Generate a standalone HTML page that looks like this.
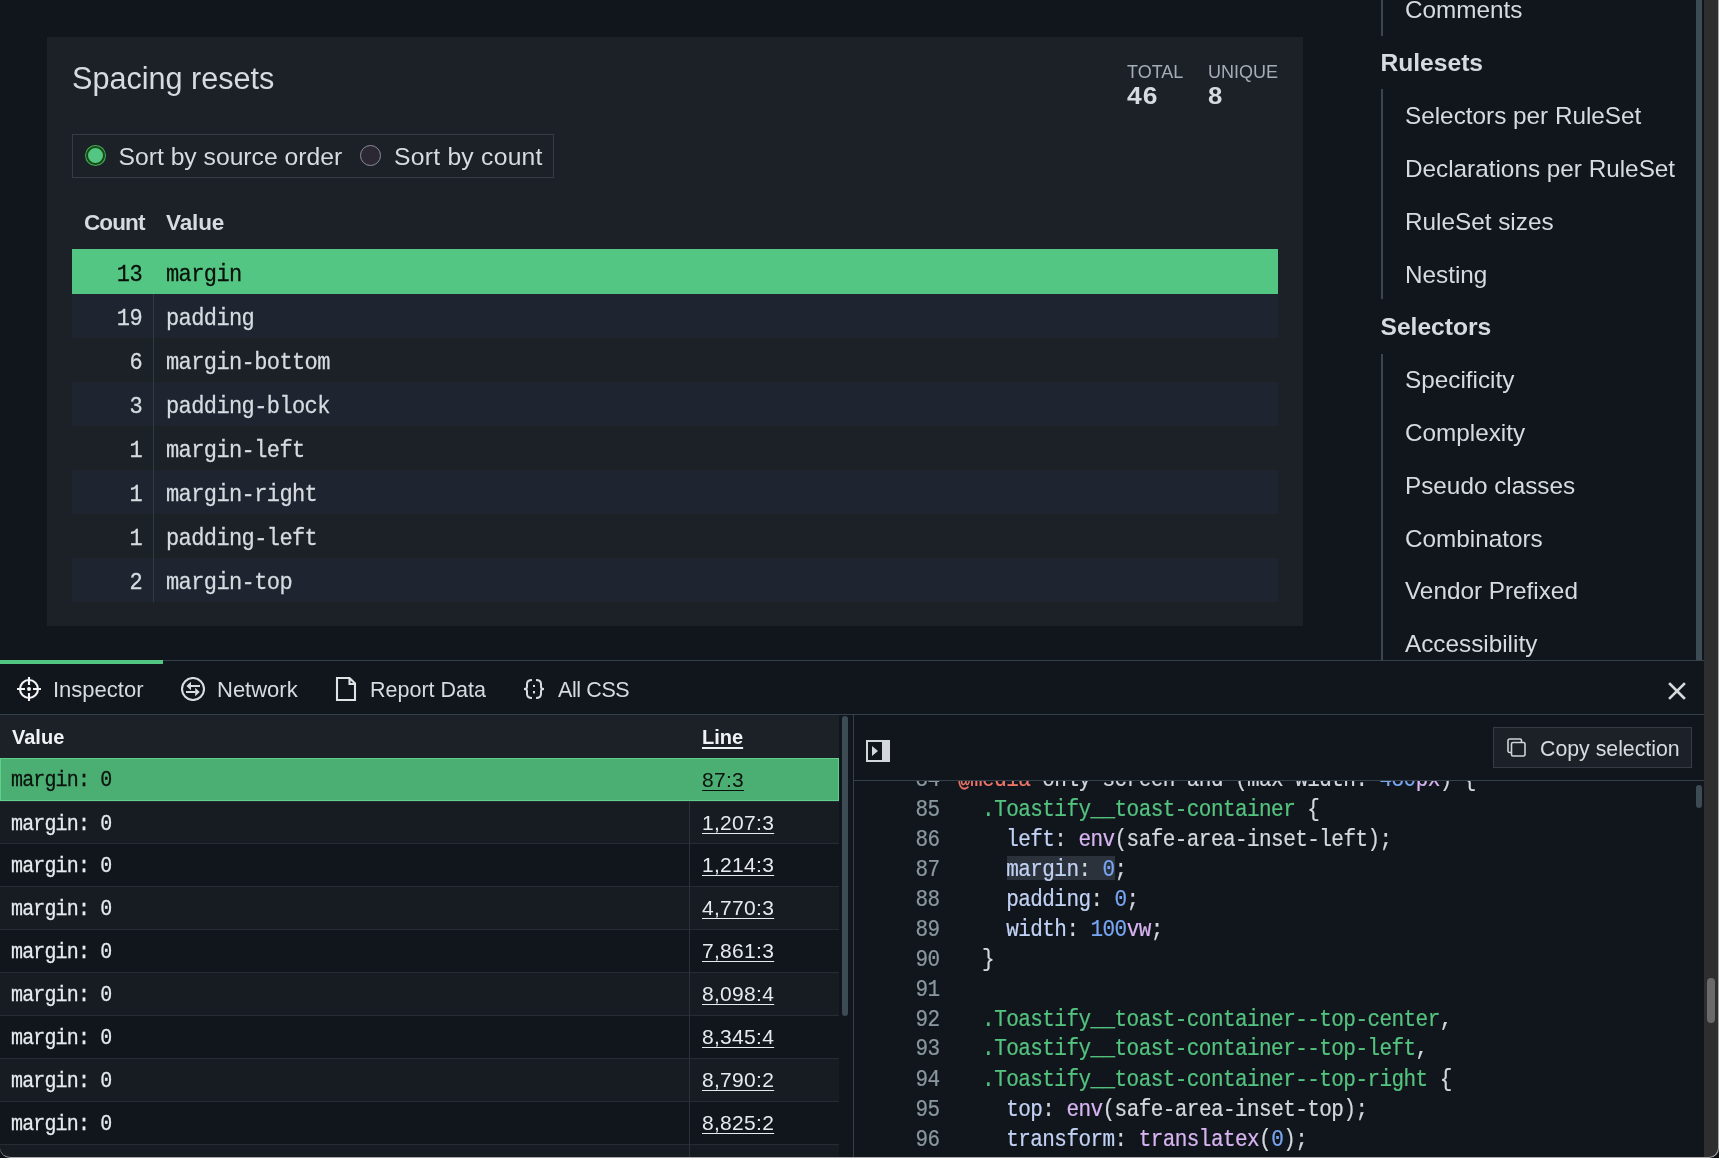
<!DOCTYPE html>
<html><head><meta charset="utf-8">
<style>
*{box-sizing:border-box;margin:0;padding:0}
html,body{width:1719px;height:1158px;overflow:hidden;background:#0c1116}
body{position:relative;font-family:"Liberation Sans",sans-serif;color:#d6dbe0}
.abs{position:absolute;white-space:pre}
.mono{font-family:"Liberation Mono",monospace}
#win{will-change:transform;position:absolute;left:0;top:0;width:1719px;height:1158px;overflow:hidden;background:#11161c;border-radius:0 0 10px 10px}
#card{position:absolute;left:47px;top:37px;width:1256px;height:589px;background:#1c2128}
.row{position:absolute;left:72px;width:1206px;height:44px}
.row .c{position:absolute;right:1136px;top:4.2px;line-height:44px;font-size:22px;letter-spacing:-0.6px;font-family:"Liberation Mono",monospace;-webkit-text-stroke:0.25px currentColor}
.row .v{position:absolute;left:94px;top:4.2px;line-height:44px;font-size:22px;letter-spacing:-0.6px;-webkit-text-stroke:0.25px currentColor}
.side{position:absolute;left:1405px;font-size:24.3px;line-height:30px;color:#d6dbe0}
.sideh{position:absolute;left:1380.5px;font-size:24.6px;font-weight:700;line-height:30px;color:#d6dbe0}
.sline{position:absolute;left:1381px;width:2px;background:#3a4751}
.row.g .c,.row.g .v{top:5px}
.row .c,.row .v{transform:scaleY(1.1);transform-origin:0 27.9px}
.brow .v{transform:scaleY(1.08);transform-origin:0 26.8px}
.tab{position:absolute;top:677px;font-size:22px;line-height:26px;color:#d6dbe0}
.brow{position:absolute;left:0;width:839px;height:43px;border-top:1px solid #242c34}
.brow .v{position:absolute;left:11px;top:1px;line-height:43px;font-size:20px;letter-spacing:-0.85px;color:#e6eaee;-webkit-text-stroke:0.25px currentColor}
.brow .l{position:absolute;left:702px;top:-1px;line-height:43px;font-size:21px;letter-spacing:0.3px;color:#e6eaee;text-decoration:underline;text-decoration-thickness:1px;text-underline-offset:3px}
.brow .d{position:absolute;left:689px;top:-1px;width:1px;height:43px;background:#2a333c}
.hl{}
.code div{white-space:pre;height:27.2727px}
.code{white-space:normal;position:absolute;font-size:21px;letter-spacing:-0.56px;line-height:27.2727px;transform:scaleY(1.1);transform-origin:0 0;font-family:"Liberation Mono",monospace;color:#d2d8de;-webkit-text-stroke:0.2px currentColor}
.ln{display:inline-block;width:79.5px;text-align:right;color:#8a979f;margin-right:18.5px}
.sel{color:#54c37f}.prop{color:#c2d2f5}.fn{color:#d8b4f2}.num{color:#78a6f2}.kw{color:#f0766a}
</style></head><body>
<div id="win">
  <!-- top card -->
  <div id="card"></div>
  <div class="abs" style="left:72px;top:59.5px;font-size:30.6px;line-height:36px">Spacing resets</div>
  <div class="abs" style="left:1127px;top:61.8px;font-size:18px;line-height:20px;color:#a3adb8">TOTAL</div>
  <div class="abs" style="left:1208px;top:61.8px;font-size:18px;line-height:20px;color:#a3adb8">UNIQUE</div>
  <div class="abs" style="left:1126.5px;top:81.8px;font-size:23px;line-height:28px;font-weight:700;letter-spacing:0.8px;transform:scaleX(1.15);transform-origin:left">46</div>
  <div class="abs" style="left:1208px;top:81.8px;font-size:23px;line-height:28px;font-weight:700;transform:scaleX(1.12);transform-origin:left">8</div>

  <div class="abs" style="left:72px;top:134px;width:482px;height:44px;border:1px solid #343d46"></div>
  <div class="abs" style="left:85.9px;top:146px;width:19px;height:19px;border-radius:50%;background:#53c683;border:2.7px solid #1a4a14;box-shadow:0 0 0 1px #3fae5a"></div>
  <div class="abs" style="left:118.5px;top:143px;font-size:24.7px;line-height:28px">Sort by source order</div>
  <div class="abs" style="left:360px;top:145px;width:21px;height:21px;border-radius:50%;background:#2b2833;border:1px solid #8e8b97"></div>
  <div class="abs" style="left:394px;top:143px;font-size:24.7px;line-height:28px;letter-spacing:0.25px">Sort by count</div>

  <div class="abs" style="left:84px;top:210px;font-size:22.5px;line-height:26px;font-weight:700;letter-spacing:-0.9px">Count</div>
  <div class="abs" style="left:166px;top:210px;font-size:22.5px;line-height:26px;font-weight:700;letter-spacing:-0.1px">Value</div>


  <div class="row g" style="top:249px;height:44.5px;background:#53c683;color:#0a0f0a"><span class="c">13</span><span class="v mono">margin</span></div>
  <div class="row" style="top:293.5px;background:#1f2530"><span class="c">19</span><span class="v mono">padding</span></div>
  <div class="row" style="top:337.5px"><span class="c">6</span><span class="v mono">margin-bottom</span></div>
  <div class="row" style="top:381.5px;background:#1f2530"><span class="c">3</span><span class="v mono">padding-block</span></div>
  <div class="row" style="top:425.5px"><span class="c">1</span><span class="v mono">margin-left</span></div>
  <div class="row" style="top:469.5px;background:#1f2530"><span class="c">1</span><span class="v mono">margin-right</span></div>
  <div class="row" style="top:513.5px"><span class="c">1</span><span class="v mono">padding-left</span></div>
  <div class="row" style="top:557.5px;background:#1f2530"><span class="c">2</span><span class="v mono">margin-top</span></div>

  <div class="abs" style="left:152.5px;top:293.5px;width:1px;height:308px;background:#2e3c45"></div>
  <!-- sidebar -->
  <div class="sline" style="top:0;height:36px"></div>
  <div class="side" style="top:calc(-4px - 1px)">Comments</div>
  <div class="sideh" style="top:calc(48.5px - 0.7px)">Rulesets</div>
  <div class="sline" style="top:89px;height:210px"></div>
  <div class="side" style="top:calc(101.5px - 1px)">Selectors per RuleSet</div>
  <div class="side" style="top:calc(154.5px - 1px)">Declarations per RuleSet</div>
  <div class="side" style="top:calc(207.5px - 1px)">RuleSet sizes</div>
  <div class="side" style="top:calc(260.5px - 1px)">Nesting</div>
  <div class="sideh" style="top:calc(312.5px - 0.7px)">Selectors</div>
  <div class="sline" style="top:354px;height:306px"></div>
  <div class="side" style="top:calc(365.5px - 1px)">Specificity</div>
  <div class="side" style="top:calc(418.5px - 1px)">Complexity</div>
  <div class="side" style="top:calc(471.5px - 1px)">Pseudo classes</div>
  <div class="side" style="top:calc(524.5px - 1px)">Combinators</div>
  <div class="side" style="top:calc(576.5px - 1px)">Vendor Prefixed</div>
  <div class="side" style="top:calc(629.5px - 1px)">Accessibility</div>
  <div class="abs" style="left:1696px;top:0;width:6px;height:660px;background:#3c4b54"></div>

  <!-- right grey strip -->
  <div class="abs" style="left:1704px;top:0;width:15px;height:1158px;background:#2e2e2e"></div>
  <div class="abs" style="left:1707px;top:978px;width:8px;height:45px;border-radius:4px;background:#6a6a6a"></div>

  <!-- bottom panel -->
  <div class="abs" style="left:0;top:660px;width:1704px;height:498px;background:#11161c;border-top:1px solid #34414a"></div>
  <div class="abs" style="left:0;top:660px;width:163px;height:4px;background:#53c683"></div>
  <div class="abs" style="left:0;top:714px;width:1704px;height:1px;background:#34414a"></div>

  <div class="tab" style="left:53px">Inspector</div>
  <div class="tab" style="left:217px">Network</div>
  <div class="tab" style="left:370px;font-size:21.5px">Report Data</div>
  <div class="tab" style="left:558px;font-size:21.5px;letter-spacing:-0.4px">All CSS</div>

  <svg class="abs" style="left:17px;top:677px" width="24" height="24" viewBox="0 0 24 24" fill="none" stroke="#f2f4f6" stroke-width="2.1">
    <circle cx="12" cy="12" r="9"/>
    <path d="M12 0V8M12 16V24M0 12H8M16 12H24"/>
    <circle cx="12" cy="12" r="2" fill="#f2f4f6" stroke="none"/>
  </svg>
  <svg class="abs" style="left:181px;top:677px" width="24" height="24" viewBox="0 0 24 24" fill="none" stroke="#d8dce0" stroke-width="2.1">
    <circle cx="12" cy="12" r="11"/>
    <path d="M9.5 9H19M5 15H14.5"/>
    <path d="M5.4 9L10 4.8V13.2Z M18.7 15L14.2 10.8V19.2Z" fill="#d8dce0" stroke="none"/>
  </svg>
  <svg class="abs" style="left:335px;top:677px" width="24" height="24" viewBox="0 0 24 24" fill="none" stroke="#dfe3e6" stroke-width="2.1">
    <path d="M2 1H14.5L20 6.5V23H2Z M14.5 1V7H20"/>
  </svg>
  <svg class="abs" style="left:522px;top:677px" width="24" height="24" viewBox="0 0 24 24" fill="none" stroke="#d8dce0" stroke-width="2">
    <path d="M10 3C6.5 3 5 4.5 5 7V10C5 11.5 4 12 2 12C4 12 5 12.5 5 14V17C5 19.5 6.5 21 10 21"/>
    <path d="M14 3C17.5 3 19 4.5 19 7V10C19 11.5 20 12 22 12C20 12 19 12.5 19 14V17C19 19.5 17.5 21 14 21"/>
    <rect x="11" y="8" width="2" height="2" fill="#d8dce0" stroke="none"/>
    <rect x="11" y="14" width="2" height="2.4" fill="#d8dce0" stroke="none"/>
  </svg>
  <svg class="abs" style="left:1665px;top:679px" width="24" height="24" viewBox="0 0 24 24" fill="none" stroke="#d6dadd" stroke-width="2.6" stroke-linecap="square">
    <path d="M5 5L19 19M19 5L5 19"/>
  </svg>

  <!-- left table -->
  <div class="abs" style="left:0;top:715px;width:839px;height:43px;background:#1c2128"></div>
  <div class="abs" style="left:12px;top:725px;font-size:20px;line-height:24px;font-weight:700;color:#f0f3f6">Value</div>
  <div class="abs" style="left:702px;top:725px;font-size:20px;line-height:24px;font-weight:700;color:#f0f3f6;text-decoration:underline;text-decoration-thickness:2px;text-underline-offset:3px">Line</div>

  <div class="brow" style="top:800.50px;background:#171c22"><span class="v mono">margin: 0</span><span class="d"></span><span class="l">1,207:3</span></div>
  <div class="brow" style="top:843.43px"><span class="v mono">margin: 0</span><span class="d"></span><span class="l">1,214:3</span></div>
  <div class="brow" style="top:886.36px;background:#171c22"><span class="v mono">margin: 0</span><span class="d"></span><span class="l">4,770:3</span></div>
  <div class="brow" style="top:929.29px"><span class="v mono">margin: 0</span><span class="d"></span><span class="l">7,861:3</span></div>
  <div class="brow" style="top:972.22px;background:#171c22"><span class="v mono">margin: 0</span><span class="d"></span><span class="l">8,098:4</span></div>
  <div class="brow" style="top:1015.15px"><span class="v mono">margin: 0</span><span class="d"></span><span class="l">8,345:4</span></div>
  <div class="brow" style="top:1058.08px;background:#171c22"><span class="v mono">margin: 0</span><span class="d"></span><span class="l">8,790:2</span></div>
  <div class="brow" style="top:1101.01px"><span class="v mono">margin: 0</span><span class="d"></span><span class="l">8,825:2</span></div>
  <div class="brow" style="top:1143.94px;background:#171c22"><span class="d"></span></div>
  <div class="brow" style="top:758px;background:#4bae72;border:1px solid #5fcf8c"><span class="v mono" style="color:#0b120d;left:10px;top:0">margin: 0</span><span class="l" style="color:#0b120d;left:701px;top:-1px">87:3</span></div>

  <div class="abs" style="left:842px;top:716px;width:6px;height:300px;border-radius:3px;background:#3c4b54"></div>
  <div class="abs" style="left:853px;top:715px;width:1px;height:443px;background:#34414a"></div>

  <!-- right pane -->
  <div class="abs" style="left:854px;top:780px;width:850px;height:1px;background:#34414a"></div>
  <div class="abs" style="left:1493px;top:727px;width:199px;height:41px;background:#1c2128;border:1px solid #343d46"></div>
  <div class="abs" style="left:1540px;top:736px;font-size:21.3px;line-height:26px">Copy selection</div>

  <svg class="abs" style="left:866px;top:740px" width="24" height="22" viewBox="0 0 24 22">
    <rect x="0" y="0" width="24" height="22" fill="#d3d7db"/>
    <rect x="2" y="2" width="14" height="18" fill="#10151b"/>
    <path d="M6 6L12 11L6 16Z" fill="#d3d7db"/>
  </svg>
  <svg class="abs" style="left:1506px;top:737px" width="22" height="22" viewBox="0 0 22 22" fill="none" stroke="#cfd3d7" stroke-width="1.6">
    <path d="M5 15.5H3.5C2.7 15.5 2 14.8 2 14V3.5C2 2.7 2.7 2 3.5 2H14C14.8 2 15.5 2.7 15.5 3.5V5"/>
    <rect x="5.5" y="5.5" width="13.5" height="13.5" rx="1.5"/>
  </svg>

  <div class="abs" style="left:1007px;top:856px;width:108px;height:24px;background:#2b323b"></div>
  <div class="abs" style="left:854px;top:781px;width:832px;height:377px;overflow:hidden">
    <div class="code" style="left:6px;top:-15.8px">
<div><span class="ln">84</span><span class="kw">@media</span> only screen and (max-width: <span class="num">480</span><span class="fn">px</span>) {</div>
<div><span class="ln">85</span>  <span class="sel">.Toastify__toast-container</span> {</div>
<div><span class="ln">86</span>    <span class="prop">left</span>: <span class="fn">env</span>(safe-area-inset-left);</div>
<div><span class="ln">87</span>    <span class="hl"><span class="prop">margin</span>: <span class="num">0</span></span>;</div>
<div><span class="ln">88</span>    <span class="prop">padding</span>: <span class="num">0</span>;</div>
<div><span class="ln">89</span>    <span class="prop">width</span>: <span class="num">100</span><span class="fn">vw</span>;</div>
<div><span class="ln">90</span>  }</div>
<div><span class="ln">91</span></div>
<div><span class="ln">92</span>  <span class="sel">.Toastify__toast-container--top-center</span>,</div>
<div><span class="ln">93</span>  <span class="sel">.Toastify__toast-container--top-left</span>,</div>
<div><span class="ln">94</span>  <span class="sel">.Toastify__toast-container--top-right</span> {</div>
<div><span class="ln">95</span>    <span class="prop">top</span>: <span class="fn">env</span>(safe-area-inset-top);</div>
<div><span class="ln">96</span>    <span class="prop">transform</span>: <span class="fn">translatex</span>(<span class="num">0</span>);</div>
<div><span class="ln">97</span>  }</div>
    </div>
  </div>
  <div class="abs" style="left:1696px;top:785px;width:6px;height:23px;border-radius:3px;background:#3c4b54"></div>
</div>
<!-- window frame edge -->
<div class="abs" style="left:0;top:0;width:1719px;height:1158px;border-radius:0 0 10px 10px;border-right:1px solid #a9a9a9;border-bottom:1px solid #a9a9a9;pointer-events:none"></div>
</body></html>
